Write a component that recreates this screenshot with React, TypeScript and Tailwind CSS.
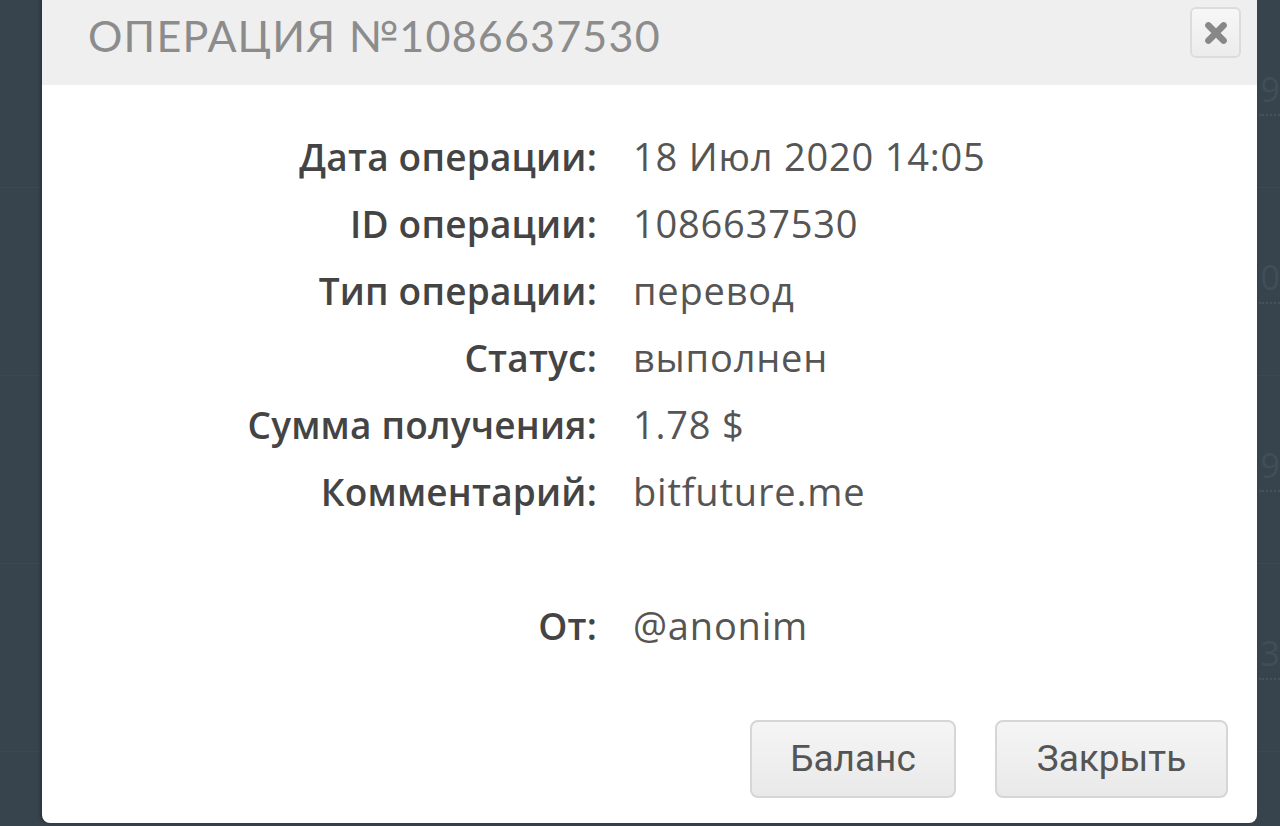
const DETAILS = [
  { label: 'Дата операции:', value: '18 Июл 2020 14:05' },
  { label: 'ID операции:', value: '1086637530' },
  { label: 'Тип операции:', value: 'перевод' },
  { label: 'Статус:', value: 'выполнен' },
  { label: 'Сумма получения:', value: '1.78 $' },
  { label: 'Комментарий:', value: 'bitfuture.me' },
  { label: '', value: '' },
  { label: 'От:', value: '@anonim' },
];

const BG_ROWS = ['9', '0', '9', '3', ''];

export default function App() {
  return (
    <div className="relative w-[1280px] h-[826px] overflow-hidden bg-[#37444d] font-['Open_Sans',sans-serif]">
      {/* table behind the dialog */}
      <div className="flex flex-col">
        {BG_ROWS.map((d, i) => (
          <div key={i} className="h-[188px] flex items-center justify-end border-b border-[#3c4952]">
            <span className="text-[34px] leading-none text-[#414e57] border-b-2 border-dotted border-[#46535c] pb-2 pl-[2px]">
              {d}
            </span>
          </div>
        ))}
      </div>

      {/* dialog */}
      <div className="absolute left-[42px] top-0 w-[1215px] h-[823px] bg-white rounded-b-lg shadow-[-2px_0_3px_rgba(0,0,0,0.25)] flex flex-col">
        <div className="h-[85px] bg-[#efefef] flex items-center justify-between pl-[46px] pr-[16px]">
          <h1 className="font-['Lato',sans-serif] text-[43px] tracking-[1.2px] text-[#8c8c8c] font-normal mt-[-12px]">
            ОПЕРАЦИЯ №1086637530
          </h1>
          <button
            type="button"
            className="w-[51px] h-[51px] mt-[-20px] rounded-md border-2 border-[#dcdcdc] bg-gradient-to-b from-[#f7f7f7] to-[#ececec] flex items-center justify-center"
          >
            <svg width="26" height="26" viewBox="0 0 24 24">
              <path d="M5 5 L19 19 M19 5 L5 19" stroke="#888" strokeWidth="6" strokeLinecap="round" />
            </svg>
          </button>
        </div>

        <div className="pt-[38px] flex flex-col">
          {DETAILS.map(({ label, value }, i) => (
            <div key={i} className="h-[67px] flex items-center">
              <div className="w-[555px] text-right text-[37px] font-semibold text-[#444] tracking-[0.2px]">{label}</div>
              <div className="ml-[36px] text-[38px] text-[#555] tracking-[0.8px]">{value}</div>
            </div>
          ))}
        </div>

        <div className="mt-[61px] flex justify-end gap-[39px] pr-[29px]">
          <button
            type="button"
            className="w-[206px] h-[78px] rounded-lg border-2 border-[#d6d6d6] bg-gradient-to-b from-[#f5f5f5] to-[#e9e9e9] font-['Roboto',sans-serif] text-[37px] text-[#555]"
          >
            Баланс
          </button>
          <button
            type="button"
            className="w-[233px] h-[78px] rounded-lg border-2 border-[#d6d6d6] bg-gradient-to-b from-[#f5f5f5] to-[#e9e9e9] font-['Roboto',sans-serif] text-[37px] text-[#555]"
          >
            Закрыть
          </button>
        </div>
      </div>
    </div>
  );
}
